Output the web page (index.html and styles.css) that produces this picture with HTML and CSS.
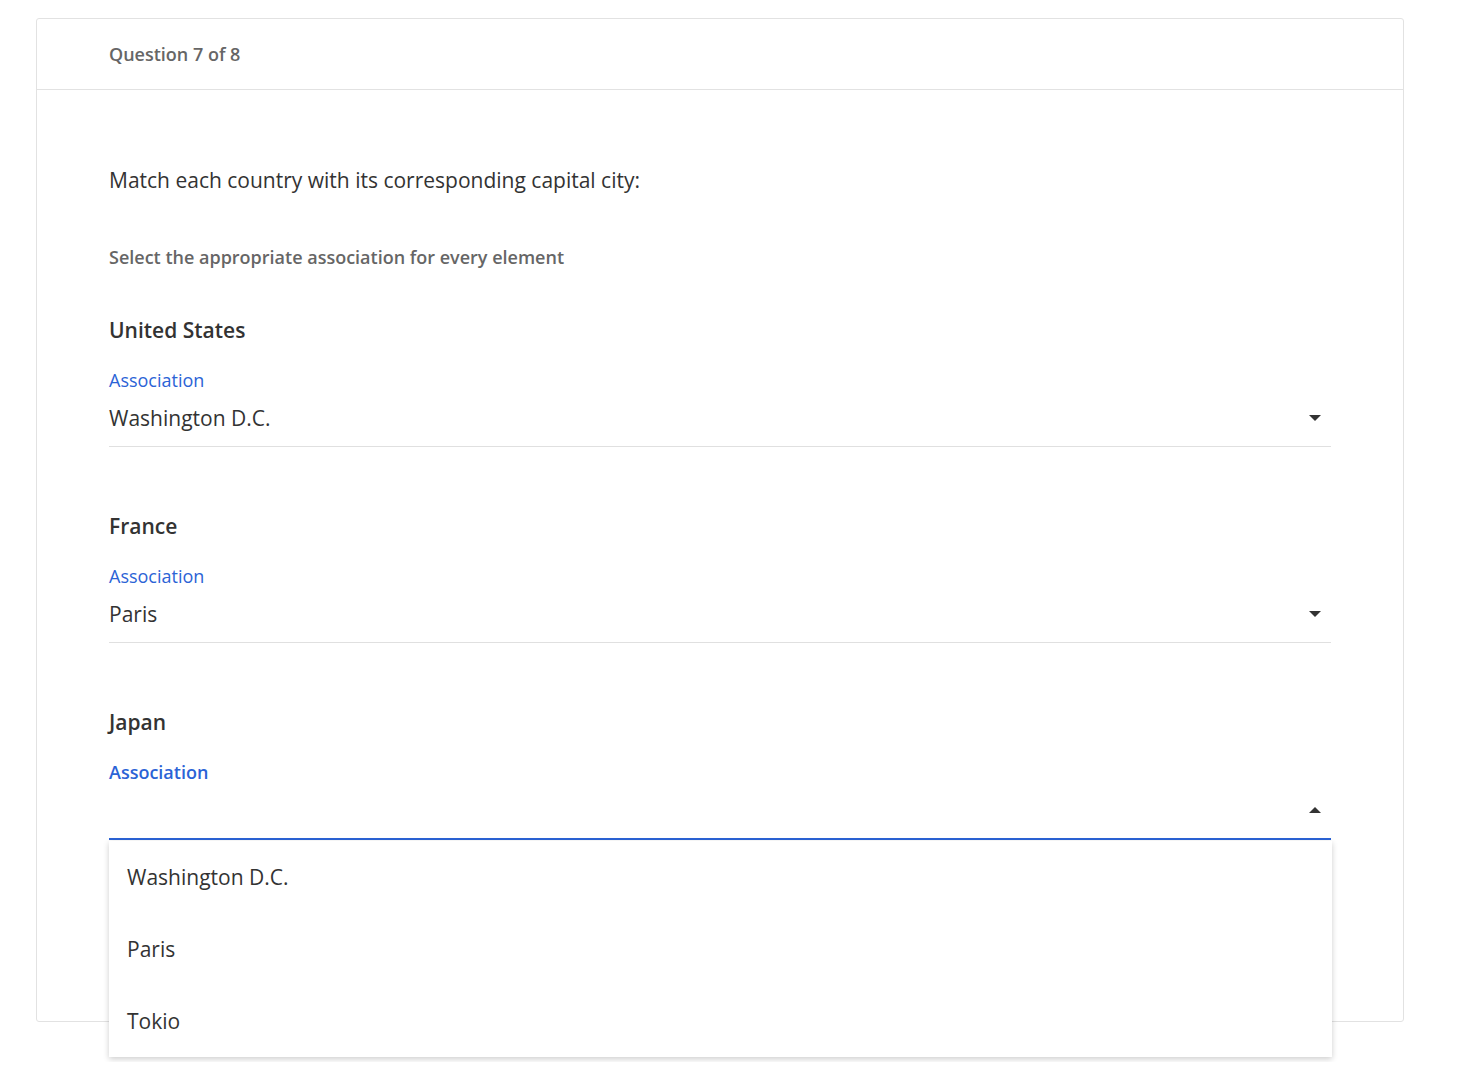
FILE: index.html
```html
<!DOCTYPE html>
<html lang="en">
<head>
    <meta charset="UTF-8">
    <meta name="viewport" content="width=device-width, initial-scale=1.0">
    <title>Question 7 of 8</title>
    <link rel="stylesheet" href="styles.css">
</head>
<body>
    <div class="card">
        <div class="card-header">Question 7 of 8</div>

        <div class="card-body">
            <p class="question">Match each country with its corresponding capital city:</p>
            <p class="hint">Select the appropriate association for every element</p>

            <!-- United States -->
            <div class="field">
                <div class="field-title">United States</div>
                <div class="select">
                    <span class="select-label">Association</span>
                    <div class="select-value">
                        <span>Washington D.C.</span>
                        <span class="arrow"></span>
                    </div>
                </div>
            </div>

            <!-- France -->
            <div class="field">
                <div class="field-title">France</div>
                <div class="select">
                    <span class="select-label">Association</span>
                    <div class="select-value">
                        <span>Paris</span>
                        <span class="arrow"></span>
                    </div>
                </div>
            </div>

            <!-- Japan (open) -->
            <div class="field">
                <div class="field-title">Japan</div>
                <div class="select open">
                    <span class="select-label">Association</span>
                    <div class="select-value">
                        <span></span>
                        <span class="arrow up"></span>
                    </div>
                    <ul class="menu">
                        <li>Washington D.C.</li>
                        <li>Paris</li>
                        <li>Tokio</li>
                    </ul>
                </div>
            </div>
        </div>
    </div>
</body>
</html>
```

FILE: styles.css
```css
body {
    margin: 0;
    padding: 18px 72px 40px 36px;
    font-family: "Open Sans", Arial, sans-serif;
    background-color: #fff;
    color: #333;
}
.card {
    border: 1px solid #e2e2e2;
    border-radius: 3px;
    background-color: #fff;
}
.card-header {
    height: 71px;
    box-sizing: border-box;
    padding: 23px 72px 0;
    border-bottom: 1px solid #e2e2e2;
    font-size: 18px;
    line-height: 24px;
    font-weight: 600;
    color: #666;
}
.card-body {
    padding: 76px 72px 181px;
}
.question {
    margin: 0;
    font-size: 21px;
    line-height: 28px;
    color: #333;
}
.hint {
    margin: 51px 0 0;
    font-size: 18px;
    line-height: 24px;
    font-weight: 600;
    color: #666;
}
.field {
    margin-top: 47px;
}
.field + .field {
    margin-top: 65px;
}
.field-title {
    font-size: 21px;
    line-height: 28px;
    font-weight: 600;
    color: #333;
}
.select {
    position: relative;
    margin-top: 24px;
}
.select-label {
    display: block;
    font-size: 18px;
    line-height: 24px;
    color: #2b63d6;
}
.select-value {
    display: flex;
    align-items: center;
    justify-content: space-between;
    margin-top: 12px;
    height: 28px;
    padding-bottom: 14px;
    border-bottom: 1px solid #e0e0e0;
    font-size: 21px;
    line-height: 28px;
    color: #333;
}
.arrow {
    width: 0;
    height: 0;
    margin-right: 10px;
    border-left: 6px solid transparent;
    border-right: 6px solid transparent;
    border-top: 6px solid #333;
}
.arrow.up {
    border-top: none;
    border-bottom: 6px solid #333;
}
.select.open .select-label {
    font-weight: 600;
}
.select.open .select-value {
    padding-bottom: 14px;
    border-bottom: 2px solid #2b63d6;
}
.menu {
    position: absolute;
    top: calc(100% + 1px);
    left: 0;
    right: -1px;
    margin: 0;
    padding: 0;
    list-style: none;
    background-color: #fff;
    box-shadow: 0 2px 6px rgba(0, 0, 0, 0.2);
    z-index: 10;
}
.menu li {
    height: 72px;
    padding-left: 18px;
    font-size: 21px;
    line-height: 72px;
    color: #333;
}
```
